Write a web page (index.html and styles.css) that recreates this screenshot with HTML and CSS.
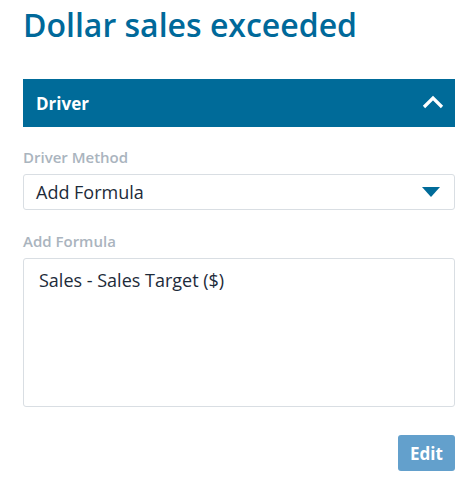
FILE: index.html
```html
<!DOCTYPE html>
<html>
<head>
<meta charset="utf-8">
<link rel="stylesheet" href="styles.css">
</head>
<body>
<div class="page">
  <h1 class="title">Dollar sales exceeded</h1>
  <div class="panel-header">
    <span class="panel-title">Driver</span>
    <svg class="chevron" width="22" height="14" viewBox="0 0 22 14"><path d="M2 12 L11 3 L20 12" fill="none" stroke="#fff" stroke-width="3.2"/></svg>
  </div>
  <div class="field">
    <label class="label">Driver Method</label>
    <div class="select">
      <span>Add Formula</span>
      <svg class="caret" width="18" height="11" viewBox="0 0 18 11"><path d="M0 0 H18 L9 10 Z" fill="#006b99"/></svg>
    </div>
  </div>
  <div class="field">
    <label class="label">Add Formula</label>
    <div class="textarea">Sales - Sales Target ($)</div>
  </div>
  <div class="actions">
    <button class="btn">Edit</button>
  </div>
</div>
</body>
</html>
```
FILE: styles.css
```css
* { box-sizing: border-box; }
body {
  margin: 0;
  font-family: "Open Sans", "Noto Sans", sans-serif;
  background: #fff;
}
.page {
  padding: 0 15px 0 23px;
  width: 470px;
}
.title {
  margin: 0;
  padding-top: 4px;
  height: 79px;
  font-size: 32px;
  font-weight: 600;
  color: #00699a;
  line-height: 42px;
}
.panel-header {
  height: 48px;
  background: #006b99;
  display: flex;
  align-items: center;
  justify-content: space-between;
  padding: 0 11px 0 13px;
}
.panel-title {
  color: #fff;
  font-weight: 700;
  font-size: 17px;
}
.chevron { margin-top: -2px; }
.field { display: flex; flex-direction: column; }
.label {
  margin-top: 20px;
  font-size: 15px;
  font-weight: 600;
  color: #aab4be;
  line-height: 20px;
  margin-bottom: 7px;
}
.field + .field .label { margin-top: 21px; margin-bottom: 7px; }
.select {
  height: 36px;
  border: 1px solid #d9dee3;
  border-radius: 3px;
  display: flex;
  align-items: center;
  justify-content: space-between;
  padding: 0 14px 0 12px;
  font-size: 18px;
  color: #1d2b3a;
}
.textarea {
  height: 149px;
  border: 1px solid #d9dee3;
  border-radius: 3px;
  padding: 8px 15px;
  font-size: 18px;
  color: #1d2b3a;
  line-height: 26px;
}
.actions {
  display: flex;
  justify-content: flex-end;
  margin-top: 28px;
}
.btn {
  width: 57px;
  height: 36px;
  border: none;
  border-radius: 3px;
  background: #63a0cc;
  color: #fff;
  font-family: inherit;
  font-weight: 700;
  font-size: 17px;
  padding: 0;
}
```
